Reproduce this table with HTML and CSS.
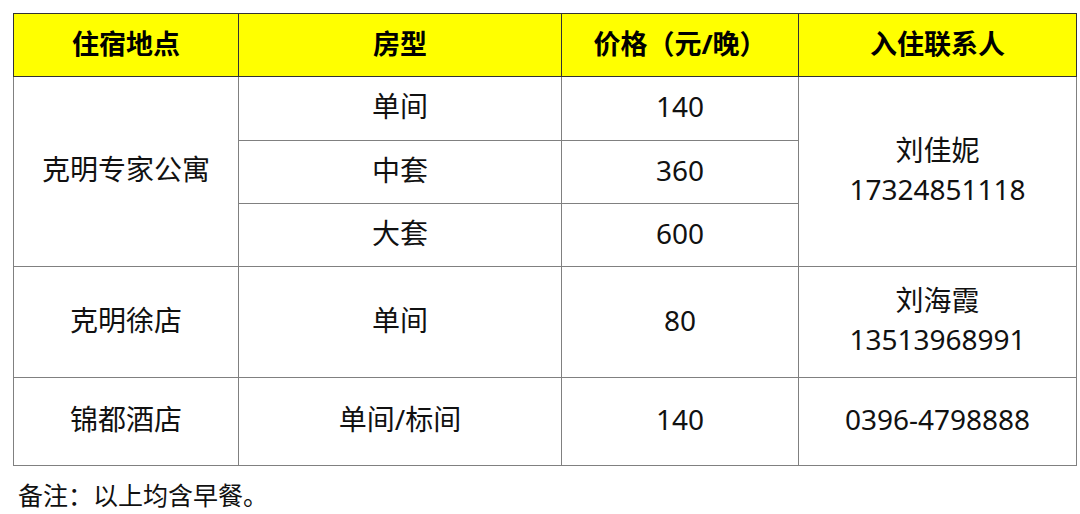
FILE: index.html
```html
<!DOCTYPE html>
<html lang="zh">
<head>
<meta charset="utf-8">
<link rel="stylesheet" href="styles.css">
</head>
<body>
<div class="page">
<table class="tbl">
  <colgroup>
    <col class="c1"><col class="c2"><col class="c3"><col class="c4">
  </colgroup>
  <thead>
    <tr class="hrow">
      <th>住宿地点</th>
      <th>房型</th>
      <th class="pc">价格（元/晚）</th>
      <th>入住联系人</th>
    </tr>
  </thead>
  <tbody>
    <tr class="r64">
      <td rowspan="3">克明专家公寓</td>
      <td>单间</td>
      <td class="pc">140</td>
      <td rowspan="3" class="contact">刘佳妮<br>17324851118</td>
    </tr>
    <tr class="r63">
      <td>中套</td>
      <td class="pc">360</td>
    </tr>
    <tr class="r63">
      <td>大套</td>
      <td class="pc">600</td>
    </tr>
    <tr class="r111">
      <td>克明徐店</td>
      <td>单间</td>
      <td class="pc">80</td>
      <td class="contact">刘海霞<br>13513968991</td>
    </tr>
    <tr class="r88">
      <td>锦都酒店</td>
      <td>单间/标间</td>
      <td class="pc">140</td>
      <td>0396-4798888</td>
    </tr>
  </tbody>
</table>
<p class="note">备注：以上均含早餐。</p>
</div>
</body>
</html>
```

FILE: styles.css
```css
html, body {
  margin: 0;
  padding: 0;
  background: #ffffff;
}
.page {
  padding: 13px 0 0 13px;
  font-family: "Noto Sans", "Noto Sans CJK SC", sans-serif;
  color: #111;
}
.tbl {
  border-collapse: collapse;
  table-layout: fixed;
  width: 1063px;
  border: 1px solid #333;
}
.c1 { width: 225px; }
.c2 { width: 323px; }
.c3 { width: 237px; }
.c4 { width: 278px; }
.tbl th, .tbl td {
  border: 1px solid #808080;
  text-align: center;
  vertical-align: middle;
  padding: 0 0 4px 0;
  font-size: 28px;
  line-height: 39px;
}
.tbl th {
  background: #ffff00;
  font-weight: 700;
  color: #000;
  border-color: #333;
  height: 58px;
  padding-bottom: 4px;
  font-size: 27px;
}
.tbl td.pc, .tbl th.pc { border-left-color: #222; }
.hrow th { border-bottom: 1px solid #333; }
.r64 td { height: 59px; }
.r63 td { height: 58px; }
.r111 td { height: 106px; }
.r88 td { height: 83px; }
.note {
  margin: 12px 0 0 5px;
  font-size: 25px;
  line-height: 34px;
  color: #111;
}
```
